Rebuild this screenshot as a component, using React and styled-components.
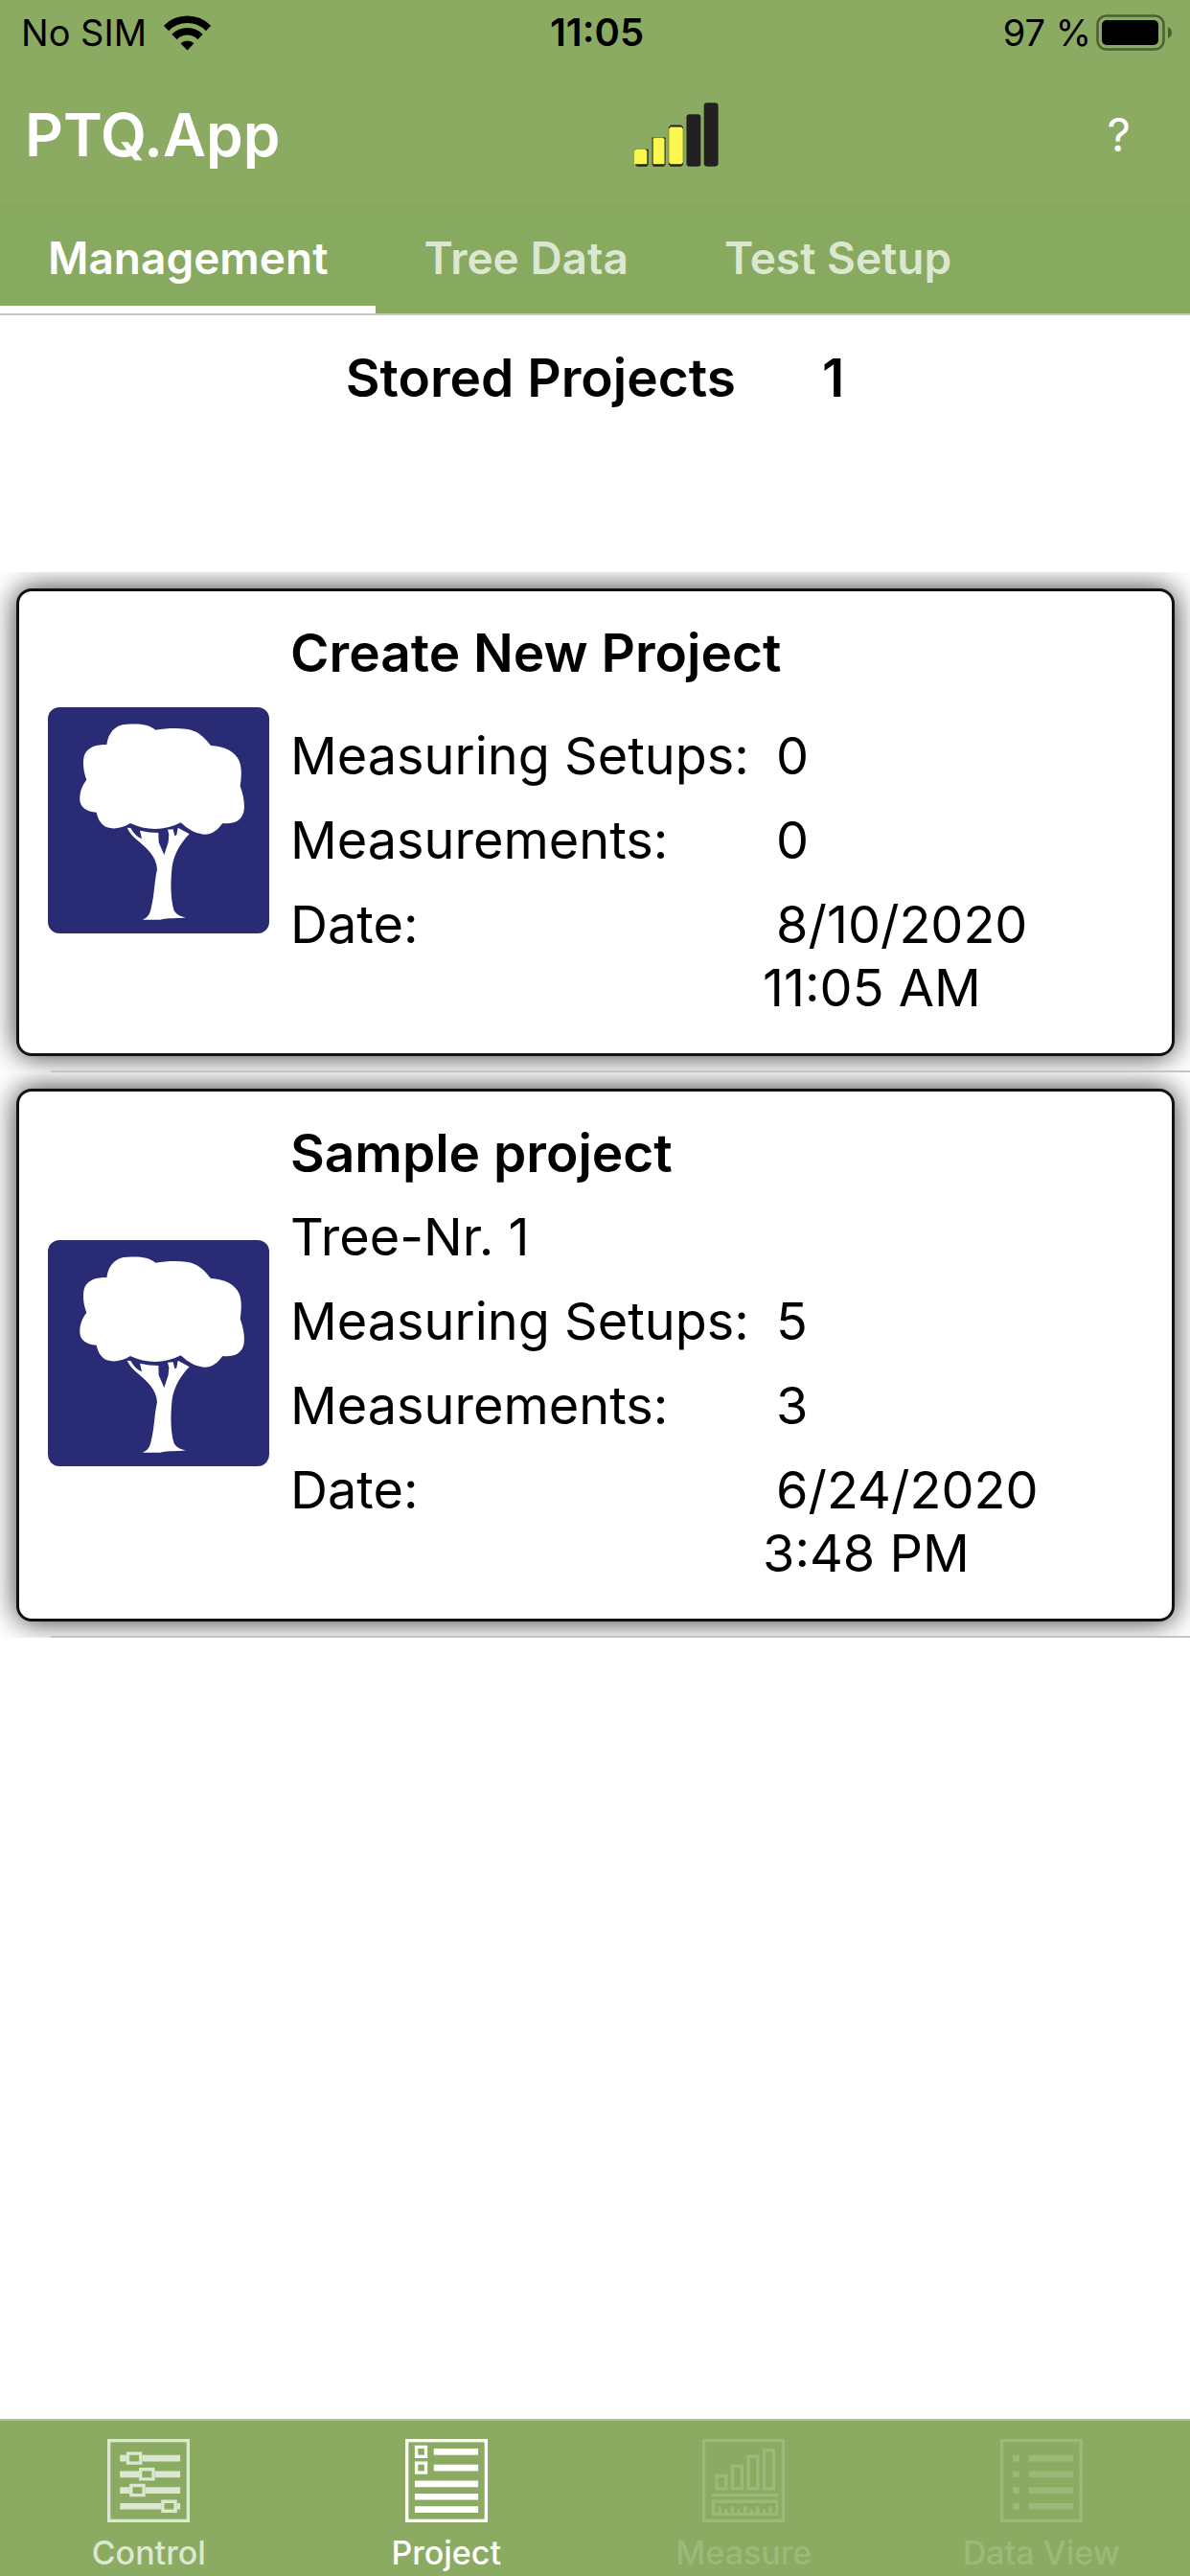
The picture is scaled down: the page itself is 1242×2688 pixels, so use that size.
import React, { useState } from 'react';
import styled, { createGlobalStyle, ThemeProvider } from 'styled-components';

const theme = {
  color: {
    bar: '#8bab62',
    tabs: '#87a960',
    navy: '#292c75',
    muted: '#dce7d1',
    disabled: '#9cb97a',
    line: '#c4c4c4',
  },
  font: "Inter, 'Liberation Sans', sans-serif",
};

const GlobalStyle = createGlobalStyle`
  *, *::before, *::after {
    box-sizing: border-box;
  }

  body {
    margin: 0;
    background: #fff;
    font-family: ${theme.font};
    color: #000;
  }

  button {
    border: 0;
    padding: 0;
    background: none;
    color: inherit;
    font: inherit;
  }
`;

const Screen = styled.div`
  display: flex;
  flex-direction: column;
  min-height: 100vh;
`;

const StatusBar = styled.div`
  display: grid;
  grid-template-columns: 1fr auto 1fr;
  align-items: center;
  height: 68px;
  padding: 0 18px 0 22px;
  background: ${({ theme }) => theme.color.bar};
  font-size: 38px;
  line-height: 68px;
`;

const StatusGroup = styled.div`
  display: flex;
  align-items: center;
  justify-content: ${({ $end }) => ($end ? 'flex-end' : 'flex-start')};
  gap: ${({ $end }) => ($end ? '5px' : '18px')};
`;

const Clock = styled.time`
  font-size: 40px;
  font-weight: 600;
`;

const Toolbar = styled.header`
  display: grid;
  grid-template-columns: 55% 1fr auto;
  align-items: center;
  height: 143px;
  padding: 2px 62px 0 26px;
  background: ${({ theme }) => theme.color.bar};
  color: #fff;
`;

const AppTitle = styled.h1`
  margin: 0;
  font-size: 62px;
  font-weight: 600;
`;

const HelpButton = styled.button`
  font-size: 48px;
`;

const Tabs = styled.nav`
  display: flex;
  height: 118px;
  background: ${({ theme }) => theme.color.tabs};
  border-bottom: 2px solid ${({ theme }) => theme.color.line};
`;

const Tab = styled.button`
  padding: 8px 50px 0;
  border-bottom: 8px solid ${({ $active }) => ($active ? '#fff' : 'transparent')};
  color: ${({ $active, theme }) => ($active ? '#fff' : theme.color.muted)};
  font-size: 46px;
  font-weight: 600;
`;

const Summary = styled.h2`
  display: flex;
  justify-content: center;
  gap: 90px;
  height: 268px;
  margin: 0;
  padding-top: 32px;
  font-size: 55px;
  font-weight: 600;
  line-height: 66px;
`;

const List = styled.ul`
  flex: 1;
  margin: 0;
  padding: 0;
  list-style: none;
`;

const Cell = styled.li`
  padding: 17px 16px 15px 17px;
  overflow: hidden;

  &::after {
    content: '';
    display: block;
    height: 2px;
    margin: 15px -16px -15px 36px;
    background: ${({ theme }) => theme.color.line};
  }
`;

const Card = styled.article`
  display: flex;
  align-items: center;
  gap: 22px;
  padding: 31px 16px 35px 30px;
  border: 3px solid #111;
  border-radius: 16px;
  background: #fff;
  box-shadow: 0 0 30px rgba(0, 0, 0, 0.8);
`;

const TreeBadge = styled.svg`
  flex: none;
  width: 231px;
  height: 236px;
`;

const Info = styled.div`
  flex: 1;
  font-size: 54px;
  line-height: 66px;
`;

const ProjectName = styled.h3`
  margin: 0;
  font-size: 55px;
  font-weight: 600;
`;

const TreeNumber = styled.p`
  min-height: 20px;
  margin: 0;
  padding-top: ${({ $filled }) => ($filled ? '22px' : '0')};
`;

const Details = styled.dl`
  display: grid;
  grid-template-columns: 6fr 5fr;
  row-gap: 22px;
  margin: 22px 0 0;

  dd {
    margin: 0;
    text-indent: 14px;
  }
`;

const BottomBar = styled.nav`
  display: grid;
  grid-template-columns: repeat(4, 1fr);
  height: 164px;
  border-top: 2px solid #b3bda8;
  background: ${({ theme }) => theme.color.bar};
`;

const BottomItem = styled.button`
  display: flex;
  flex-direction: column;
  align-items: center;
  gap: 12px;
  padding-top: 19px;
  color: ${({ $active, disabled, theme }) => {
    if (disabled) return theme.color.disabled;
    return $active ? '#fff' : theme.color.muted;
  }};
  font-size: 34px;
  font-weight: 500;
  line-height: 40px;

  svg {
    width: 86px;
    height: 87px;
  }
`;

function WifiIcon() {
  return (
    <svg width="49" height="37" viewBox="0 0 49 37" aria-hidden="true">
      <g fill="none" stroke="#000" strokeWidth="7.500">
        <path d="M2.500 13.500a31 31 0 0 1 44 0" />
        <path d="M11 22.500a19 19 0 0 1 27 0" />
      </g>
      <path d="M17.500 29.300a10 10 0 0 1 14 0L24.500 36.500z" />
    </svg>
  );
}

function BatteryIcon() {
  return (
    <svg width="80" height="38" viewBox="0 0 80 38" aria-hidden="true">
      <rect x="1.500" y="1.500" width="69" height="35" rx="9" fill="none" stroke="#000" strokeOpacity=".45" strokeWidth="2.500" />
      <rect x="6" y="6" width="59" height="26" rx="5" />
      <path d="M75 13q4 2 4 6t-4 6z" fillOpacity=".45" />
    </svg>
  );
}

function SignalIcon() {
  return (
    <svg width="89" height="67" viewBox="64 56 268 202" role="img" aria-label="Signal strength">
      <g fill="#232021">
        <path d="M70 203h41v48l-5 6H76l-6-6z" />
        <path d="M123 166h42v85l-5 6h-32l-5-6z" />
        <path d="M182 127h32l7 7v117l-7 6h-32l-7-6V134z" />
        <rect x="231" y="93" width="45" height="164" rx="9" />
        <rect x="286" y="57" width="45" height="200" rx="10" />
      </g>
      <g fill="#faf750">
        <path d="M73 203h28l6 5v42H67v-42z" />
        <path d="M128 167h30l4 4v79h-36v-79z" />
        <path d="M181 133h34l5 5v107l-5 5h-34l-5-5V138z" />
      </g>
    </svg>
  );
}

function TreeIcon() {
  return (
    <TreeBadge viewBox="60 80 693 708" aria-hidden="true">
      <rect x="60" y="80" width="693" height="708" rx="36" fill={theme.color.navy} />
      <g fill="#fff">
        <path d="M244 197C250 153 277 133 308 133C343 131 374 131 397 151C428 146 461 144 493 148C530 152 552 177 570 200C613 202 646 219 659 248C668 270 666 300 662 327C672 354 678 386 673 408C665 438 641 446 607 443C590 466 573 479 548 478C520 475 500 463 476 441C423 468 367 466 318 443C292 459 266 463 245 456C226 447 217 431 212 409C180 408 162 392 160 371C159 344 167 326 181 307C170 280 168 246 175 228C187 203 212 197 244 197Z" />
        <path d="M308 457L319 458C328 474 339 486 354 492L348 466Q377 473 406 473L407 503L424 542L437 502L439 479L435 463L452 462L457 483L463 480L467 457L503 477C475 505 455 540 449 578C443 631 444 679 455 717C464 731 477 736 492 738C470 743 438 738 411 745L356 745C373 739 380 727 384 705C394 665 393 625 402 588C400 546 369 522 342 498C327 486 315 472 308 457Z" />
      </g>
    </TreeBadge>
  );
}

function Frame({ children }) {
  return (
    <svg viewBox="0 0 26 26" preserveAspectRatio="none" fill="none" stroke="currentColor" aria-hidden="true">
      <rect x=".5" y=".5" width="25" height="25" />
      {children}
    </svg>
  );
}

function ControlIcon() {
  return (
    <Frame>
      <path strokeWidth="2" d="M4 6h2M11 6h12M4 11h6M15 11h8M4 16h3M12 16h11M4 21h13M22 21h1" />
      <path d="M6.500 4.500h4v3h-4zM10.500 9.500h4v3h-4zM7.500 14.500h4v3h-4zM17.500 19.500h4v3h-4z" />
    </Frame>
  );
}

function ProjectIcon() {
  return (
    <Frame>
      <path strokeWidth="2" d="M9 4h14M9 9h14M3 14h20M3 18h20M3 22h20" />
      <path d="M3.500 2.500h3v3h-3zM3.500 7.500h3v3h-3z" />
    </Frame>
  );
}

function MeasureIcon() {
  return (
    <Frame>
      <path d="M4.500 11.500h3v4h-3zM9.500 8.500h3v7h-3zM14.500 5.500h3v10h-3zM19.500 3.500h3v12h-3zM3 17.500h21M3.500 19.500h20v4h-20z" />
      <path d="M5.500 21v2M7.500 22v1M9.500 21v2M11.500 22v1M13.500 21v2M15.500 22v1M17.500 21v2M19.500 22v1M21.500 21v2" />
    </Frame>
  );
}

function DataIcon() {
  return (
    <Frame>
      <path strokeWidth="2" d="M4 6h2M9 6h14M4 11h2M9 11h14M4 16h2M9 16h14M4 21h2M9 21h14" />
    </Frame>
  );
}

const tabs = ['Management', 'Tree Data', 'Test Setup'];

const projects = [
  { name: 'Create New Project', setups: 0, measurements: 0, date: '8/10/2020 11:05 AM' },
  { name: 'Sample project', tree: 'Tree-Nr. 1', setups: 5, measurements: 3, date: '6/24/2020 3:48 PM' },
];

const sections = [
  { label: 'Control', icon: ControlIcon },
  { label: 'Project', icon: ProjectIcon },
  { label: 'Measure', icon: MeasureIcon, disabled: true },
  { label: 'Data View', icon: DataIcon, disabled: true },
];

function ProjectCard({ name, tree, setups, measurements, date }) {
  return (
    <Card>
      <TreeIcon />
      <Info>
        <ProjectName>{name}</ProjectName>
        <TreeNumber $filled={!!tree}>{tree}</TreeNumber>
        <Details>
          <dt>Measuring Setups:</dt>
          <dd>{setups}</dd>
          <dt>Measurements:</dt>
          <dd>{measurements}</dd>
          <dt>Date:</dt>
          <dd>{date}</dd>
        </Details>
      </Info>
    </Card>
  );
}

function App() {
  const [tab, setTab] = useState('Management');
  const [section, setSection] = useState('Project');

  return (
    <ThemeProvider theme={theme}>
      <GlobalStyle />
      <Screen>
        <StatusBar>
          <StatusGroup>
            <span>No SIM</span>
            <WifiIcon />
          </StatusGroup>
          <Clock>11:05</Clock>
          <StatusGroup $end>
            <span>97 %</span>
            <BatteryIcon />
          </StatusGroup>
        </StatusBar>
        <Toolbar>
          <AppTitle>PTQ.App</AppTitle>
          <SignalIcon />
          <HelpButton type="button">?</HelpButton>
        </Toolbar>
        <Tabs>
          {tabs.map((label) => (
            <Tab key={label} type="button" $active={label === tab} onClick={() => setTab(label)}>
              {label}
            </Tab>
          ))}
        </Tabs>
        <Summary>
          <span>Stored Projects</span>
          <span>1</span>
        </Summary>
        <List>
          {projects.map((project) => (
            <Cell key={project.name}>
              <ProjectCard {...project} />
            </Cell>
          ))}
        </List>
        <BottomBar>
          {sections.map(({ label, icon: Icon, disabled }) => (
            <BottomItem
              key={label}
              type="button"
              disabled={disabled}
              $active={label === section}
              onClick={() => setSection(label)}
            >
              <Icon />
              {label}
            </BottomItem>
          ))}
        </BottomBar>
      </Screen>
    </ThemeProvider>
  );
}

export default App;
